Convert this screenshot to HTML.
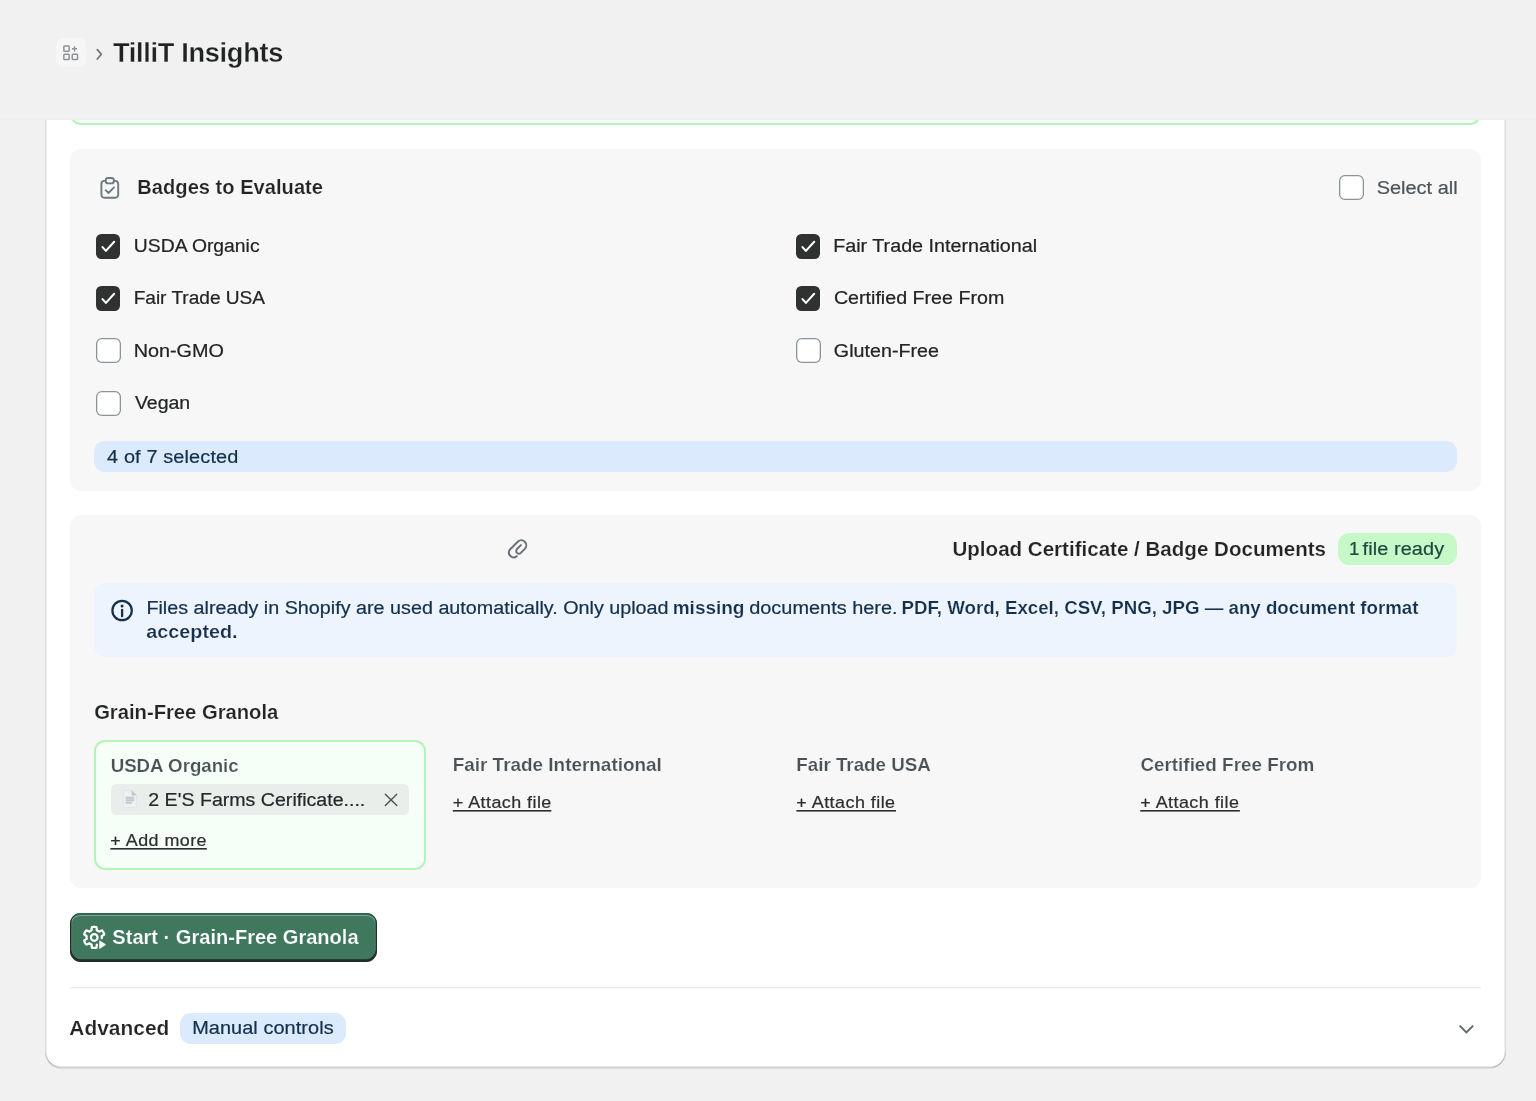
<!DOCTYPE html>
<html lang="en"><head><meta charset="utf-8"><title>TilliT Insights</title>
<style>
*{box-sizing:border-box;margin:0;padding:0}
html,body{width:1536px;height:1101px;overflow:hidden;background:#f1f1f1}
body{position:relative;font-family:"Liberation Sans", Arial, sans-serif;-webkit-font-smoothing:antialiased}
#root{position:absolute;left:0;top:0;width:1536px;height:1101px;will-change:transform}
.abs{position:absolute;overflow:visible}
.t{position:absolute;white-space:nowrap;line-height:1;transform-origin:0 0}
.t b{font-weight:700}
.t{-webkit-text-stroke:0.22px currentColor}
.card{position:absolute;left:45px;top:40px;width:1461px;height:1028px;background:#fff;border-radius:16.5px;
 box-shadow:inset 1.55px 0 0 rgba(0,0,0,.13),inset -1.55px 0 0 rgba(0,0,0,.13),inset 0 -1.4px 0 rgba(0,0,0,.18),0 1px 0 rgba(26,26,26,.09)}
.gbox{position:absolute;left:70px;top:40px;width:1411px;height:85px;border:2.2px solid #b4f4b8;border-radius:11px;background:#f5fef7}
.hdr{position:absolute;left:0;top:0;width:1536px;height:119.6px;background:#f1f1f1}
.hdrline{position:absolute;left:0;top:118.6px;width:1536px;height:1.2px;background:#eaeeec;opacity:.9}
.ibox{position:absolute;left:56.2px;top:37.9px;width:29.4px;height:29.6px;border-radius:7px;background:#f6f6f7}
.sec{position:absolute;background:#f7f7f7;border-radius:11px}
.pill{position:absolute;border-radius:11px}
.cb{position:absolute;width:24.75px;height:24.75px;border-radius:5.8px;background:#fff;box-shadow:inset 0 0 0 1.3px #8a9399}
.cb.on{background:#2f3230;box-shadow:none;width:24.5px;height:24.5px;border-radius:5.4px}
.cb.sel{box-shadow:inset 0 0 0 1.3px #8a9399}
.fbox{position:absolute;left:94.4px;top:739.8px;width:331.2px;height:129.8px;border:2.2px solid #b4f4b8;border-radius:11px;background:#f5fef7}
.chip{position:absolute;left:111px;top:784.2px;width:297.8px;height:30.8px;border-radius:5.5px;background:#e9eeeb}
.btn{position:absolute;left:69.6px;top:912.8px;width:307.6px;height:48.8px;border-radius:11px;background:#40785e;
 box-shadow:inset 0 -1.4px 0 1.4px rgba(28,32,30,.88),inset 0 2px 0 0 #2f6a50,inset 0 3px 0 0 rgba(240,240,255,.38),inset 2.1px 0 0 rgba(255,255,255,.2),inset -2.1px 0 0 rgba(255,255,255,.2)}
.divider{position:absolute;left:70px;top:987px;width:1411px;height:2px;background:linear-gradient(#eaedec 0 50%,#f6f8f7 50% 100%)}
</style></head><body>
<div id="root">
<div class="card"></div>
<div class="gbox"></div>
<div class="hdr"></div>
<div class="hdrline"></div>
<div class="ibox"></div>
<svg class="abs" style="left:56px;top:38px" width="30" height="30" viewBox="56 38 30 30" fill="none" stroke="#8b9398" stroke-width="1.5">
<rect x="63.85" y="46.05" width="5.3" height="5.3" rx="0.8"/>
<rect x="63.85" y="54.15" width="5.3" height="5.3" rx="0.8"/>
<rect x="72.25" y="54.15" width="5.3" height="5.3" rx="0.8"/>
<path d="M74.55 46.2 V51.4 M71.95 48.8 H77.15" stroke-width="1.4"/></svg>
<svg class="abs" style="left:92px;top:44px" width="16" height="20" viewBox="92 44 16 20" fill="none" stroke="#6c7479" stroke-width="1.7" stroke-linecap="round" stroke-linejoin="round">
<path d="M97.3 49.6 L101.3 54.3 L97.3 59"/></svg>
<span id="title" class="t" style="left:112.00px;top:39.00px;font-size:28px;color:#202223;font-weight:700;-webkit-text-stroke:0;letter-spacing:-0.306px;transform:translateX(0.912px) scaleX(0.9700);-webkit-text-stroke:0.32px #f1f1f1;">TilliT Insights</span>
<div class="sec" style="left:70px;top:149px;width:1411px;height:342px"></div>
<svg class="abs" style="left:96px;top:174px" width="28" height="28" viewBox="96 174 28 28" fill="none" stroke="#6d7a82" stroke-width="1.9" stroke-linecap="round" stroke-linejoin="round">
<path d="M105.2 180.9 H104.4 A3 3 0 0 0 101.4 183.9 V194.7 A3 3 0 0 0 104.4 197.7 H115.2 A3 3 0 0 0 118.2 194.7 V183.9 A3 3 0 0 0 115.2 180.9 H114.4"/>
<rect x="105.7" y="178" width="8.2" height="5.4" rx="2.4"/>
<path d="M105.7 190.2 L108.5 193 L114 187.4"/></svg>
<span id="badges" class="t" style="left:137.00px;top:178.00px;font-size:19.8px;color:#222425;font-weight:700;-webkit-text-stroke:0.18px #f7f7f7;letter-spacing:0.014px;transform:translateX(0.338px) scaleX(1.0158);">Badges to Evaluate</span>
<div class="cb sel" style="left:1339.2px;top:175.4px"></div>
<span id="selall" class="t" style="left:1376.00px;top:179.00px;font-size:18.8px;color:#4d5459;letter-spacing:0.014px;transform:translateX(0.681px) scaleX(1.0600);">Select all</span>
<div class="cb on" style="left:95.8px;top:234px"></div><svg class="abs" style="left:95.8px;top:234px" width="24.75" height="24.75" viewBox="0 0 24.75 24.75"><path d="M6.5 13.1 L9.9 16.9 L18.2 7.8" fill="none" stroke="#fff" stroke-width="2.05" stroke-linecap="round" stroke-linejoin="round"/></svg>
<span id="l0" class="t" style="left:133.00px;top:237.00px;font-size:18.8px;color:#222425;letter-spacing:-0.001px;transform:translateX(0.846px) scaleX(1.0297);">USDA Organic</span>
<div class="cb on" style="left:95.8px;top:286px"></div><svg class="abs" style="left:95.8px;top:286px" width="24.75" height="24.75" viewBox="0 0 24.75 24.75"><path d="M6.5 13.1 L9.9 16.9 L18.2 7.8" fill="none" stroke="#fff" stroke-width="2.05" stroke-linecap="round" stroke-linejoin="round"/></svg>
<span id="l1" class="t" style="left:133.00px;top:289.00px;font-size:18.8px;color:#222425;letter-spacing:-0.018px;transform:translateX(0.629px) scaleX(1.0172);">Fair Trade USA</span>
<div class="cb" style="left:95.8px;top:338px"></div>
<span id="l2" class="t" style="left:133.00px;top:342.00px;font-size:18.8px;color:#222425;letter-spacing:-0.024px;transform:translateX(0.630px) scaleX(1.0561);">Non-GMO</span>
<div class="cb" style="left:95.8px;top:391px"></div>
<span id="l3" class="t" style="left:134.00px;top:394.00px;font-size:18.8px;color:#222425;letter-spacing:-0.015px;transform:translateX(0.936px) scaleX(1.0391);">Vegan</span>
<div class="cb on" style="left:795.8px;top:234px"></div><svg class="abs" style="left:795.8px;top:234px" width="24.75" height="24.75" viewBox="0 0 24.75 24.75"><path d="M6.5 13.1 L9.9 16.9 L18.2 7.8" fill="none" stroke="#fff" stroke-width="2.05" stroke-linecap="round" stroke-linejoin="round"/></svg>
<span id="r0" class="t" style="left:833.00px;top:237.00px;font-size:18.8px;color:#222425;letter-spacing:0.001px;transform:translateX(0.183px) scaleX(1.0503);">Fair Trade International</span>
<div class="cb on" style="left:795.8px;top:286px"></div><svg class="abs" style="left:795.8px;top:286px" width="24.75" height="24.75" viewBox="0 0 24.75 24.75"><path d="M6.5 13.1 L9.9 16.9 L18.2 7.8" fill="none" stroke="#fff" stroke-width="2.05" stroke-linecap="round" stroke-linejoin="round"/></svg>
<span id="r1" class="t" style="left:833.00px;top:289.00px;font-size:18.8px;color:#222425;letter-spacing:0.005px;transform:translateX(0.881px) scaleX(1.0459);">Certified Free From</span>
<div class="cb" style="left:795.8px;top:338px"></div>
<span id="r2" class="t" style="left:833.00px;top:342.00px;font-size:18.8px;color:#222425;letter-spacing:0.014px;transform:translateX(0.824px) scaleX(1.0480);">Gluten-Free</span>
<div class="pill" style="left:94px;top:441.4px;width:1363px;height:30.8px;background:#dbeafd"></div>
<span id="sel47" class="t" style="left:107.00px;top:448.00px;font-size:18.8px;color:#14304b;letter-spacing:0.119px;transform:translateX(0.063px) scaleX(1.0600);">4 of 7 selected</span>
<div class="sec" style="left:70px;top:515px;width:1411px;height:373px"></div>
<svg class="abs" style="left:503px;top:535px" width="28" height="28" viewBox="-14 -14 28 28" fill="none" stroke="#687277" stroke-width="2" stroke-linecap="round">
<g transform="translate(0.3,0.3) rotate(-45)"><path d="M5.5 -0.4 L0 -0.4 A2.7 2.7 0 0 0 0 5 L5.6 5 A5 5 0 0 0 5.6 -5 L-5.6 -5 A4.8 4.8 0 0 0 -5.3 4.5"/></g></svg>
<span id="upload" class="t" style="left:952.00px;top:540.00px;font-size:19.8px;color:#222425;font-weight:700;-webkit-text-stroke:0.18px #f7f7f7;letter-spacing:0.002px;transform:translateX(0.467px) scaleX(1.0390);">Upload Certificate / Badge Documents</span>
<div class="pill" style="left:1337.5px;top:533px;width:119.5px;height:31.6px;background:#c6f8c8;border-radius:11.5px"></div>
<span id="ready1" class="t" style="left:1348.99px;top:540.00px;font-size:18.8px;color:#1d4a3c;letter-spacing:0.000px;">1</span>
<span id="ready" class="t" style="left:1362.00px;top:540.00px;font-size:18.8px;color:#1d4a3c;letter-spacing:0.089px;transform:translateX(0.520px) scaleX(1.0600);">file ready</span>
<div class="pill" style="left:94px;top:583.2px;width:1363px;height:73.5px;background:#edf4fe"></div>
<svg class="abs" style="left:108px;top:596px" width="28" height="28" viewBox="108 596 28 28">
<circle cx="122.1" cy="610.5" r="9.7" fill="none" stroke="#14304b" stroke-width="2.2"/>
<circle cx="122.1" cy="606" r="1.55" fill="#14304b"/>
<path d="M122.1 609.9 V616.2" stroke="#14304b" stroke-width="2.3" stroke-linecap="round"/></svg>
<span id="i1" class="t" style="left:146.00px;top:599.00px;font-size:18.8px;color:#14304b;letter-spacing:-0.005px;transform:translateX(0.379px) scaleX(1.0522);">Files already in Shopify are used automatically. Only upload</span>
<span id="i2" class="t" style="left:672.00px;top:599.00px;font-size:18.8px;color:#14304b;font-weight:700;-webkit-text-stroke:0.18px #edf4fe;letter-spacing:-0.027px;transform:translateX(0.724px) scaleX(1.0133);">missing</span>
<span id="i3" class="t" style="left:749.00px;top:599.00px;font-size:18.8px;color:#14304b;letter-spacing:0.006px;transform:translateX(0.193px) scaleX(1.0600);">documents here.</span>
<span id="i4" class="t" style="left:901.00px;top:599.00px;font-size:18.8px;color:#14304b;font-weight:700;-webkit-text-stroke:0.18px #edf4fe;letter-spacing:-0.008px;transform:translateX(0.588px) scaleX(0.9952);">PDF, Word, Excel, CSV, PNG, JPG — any document format</span>
<span id="i5" class="t" style="left:146.00px;top:623.00px;font-size:18.8px;color:#14304b;font-weight:700;-webkit-text-stroke:0.18px #edf4fe;letter-spacing:0.009px;transform:translateX(0.279px) scaleX(1.0528);">accepted.</span>
<span id="grain" class="t" style="left:94.00px;top:703.00px;font-size:19.8px;color:#222425;font-weight:700;-webkit-text-stroke:0.18px #f7f7f7;letter-spacing:-0.010px;transform:translateX(0.141px) scaleX(1.0223);">Grain-Free Granola</span>
<div class="fbox"></div>
<span id="c1" class="t" style="left:110.00px;top:757.00px;font-size:18.8px;color:#4a5257;font-weight:700;-webkit-text-stroke:0.18px #f5fef7;letter-spacing:0.011px;transform:translateX(0.655px) scaleX(0.9939);">USDA Organic</span>
<div class="chip"></div>
<svg class="abs" style="left:120px;top:788px" width="20" height="22" viewBox="120 788 20 22">
<path d="M123.2 790.6 H131.8 L136.6 795.4 V807.6 H123.2 Z" fill="#eef1f2" stroke="#dde4ef" stroke-width="0.9"/>
<path d="M131.6 790.2 L136.9 795.5 H131.6 Z" fill="#c3c6c7"/>
<path d="M125.6 797.7 H134.2 M125.6 800.25 H134.2 M125.6 802.8 H131.8" stroke="#c4c6c7" stroke-width="1.9"/></svg>
<span id="fname" class="t" style="left:148.00px;top:791.00px;font-size:18.8px;color:#26292b;letter-spacing:-0.006px;transform:translateX(0.286px) scaleX(1.0433);">2 E'S Farms Cerificate....</span>
<svg class="abs" style="left:381px;top:790px" width="20" height="20" viewBox="381 790 20 20" stroke="#4a4f50" stroke-width="1.35" stroke-linecap="round">
<path d="M385.3 794.3 L396.8 805.5 M396.8 794.3 L385.3 805.5"/></svg>
<span id="addmore" class="t" style="left:110.00px;top:833.00px;font-size:16.9px;color:#2b2f31;letter-spacing:0.431px;transform:translateX(0.374px) scaleX(1.0600);background:linear-gradient(#2b2f31,#2b2f31) 0 15px/100% 1px no-repeat,linear-gradient(rgba(43,47,49,.6),rgba(43,47,49,.6)) 0 16px/100% 1px no-repeat;">+ Add more</span>
<span id="cl0" class="t" style="left:452.00px;top:756.00px;font-size:18.8px;color:#4a5257;font-weight:700;-webkit-text-stroke:0.18px #f7f7f7;letter-spacing:-0.008px;transform:translateX(0.682px) scaleX(1.0079);">Fair Trade International</span>
<span id="at0" class="t" style="left:452.00px;top:795.00px;font-size:16.9px;color:#2b2f31;letter-spacing:0.431px;transform:translateX(0.789px) scaleX(1.0600);background:linear-gradient(#2b2f31,#2b2f31) 0 15px/100% 1px no-repeat,linear-gradient(rgba(43,47,49,.6),rgba(43,47,49,.6)) 0 16px/100% 1px no-repeat;">+ Attach file</span>
<span id="cl1" class="t" style="left:796.00px;top:756.00px;font-size:18.8px;color:#4a5257;font-weight:700;-webkit-text-stroke:0.18px #f7f7f7;letter-spacing:-0.014px;transform:translateX(0.305px) scaleX(1.0003);">Fair Trade USA</span>
<span id="at1" class="t" style="left:796.00px;top:795.00px;font-size:16.9px;color:#2b2f31;letter-spacing:0.446px;transform:translateX(0.345px) scaleX(1.0600);background:linear-gradient(#2b2f31,#2b2f31) 0 15px/100% 1px no-repeat,linear-gradient(rgba(43,47,49,.6),rgba(43,47,49,.6)) 0 16px/100% 1px no-repeat;">+ Attach file</span>
<span id="cl2" class="t" style="left:1140.00px;top:756.00px;font-size:18.8px;color:#4a5257;font-weight:700;-webkit-text-stroke:0.18px #f7f7f7;letter-spacing:0.004px;transform:translateX(0.376px) scaleX(1.0037);">Certified Free From</span>
<span id="at2" class="t" style="left:1140.00px;top:795.00px;font-size:16.9px;color:#2b2f31;letter-spacing:0.441px;transform:translateX(0.250px) scaleX(1.0600);background:linear-gradient(#2b2f31,#2b2f31) 0 15px/100% 1px no-repeat,linear-gradient(rgba(43,47,49,.6),rgba(43,47,49,.6)) 0 16px/100% 1px no-repeat;">+ Attach file</span>
<div class="btn"></div>
<svg class="abs" style="left:80px;top:922px" width="30" height="30" viewBox="80 922 30 30">
<path d="M101.76 938.24 L101.78 937.98 L101.80 937.72 L101.80 937.45 L101.80 937.18 L101.78 936.92 L101.76 936.66 L101.73 936.39 L101.71 936.13 L102.18 935.75 L103.01 935.25 L103.81 934.70 L104.21 934.20 L104.11 933.84 L103.98 933.50 L103.84 933.16 L103.68 932.83 L103.52 932.50 L103.34 932.18 L103.15 931.86 L102.95 931.55 L102.74 931.25 L102.51 930.95 L102.28 930.67 L102.02 930.41 L101.39 930.51 L100.50 930.92 L99.66 931.39 L99.10 931.61 L98.88 931.46 L98.67 931.30 L98.45 931.15 L98.23 931.00 L98.00 930.87 L97.77 930.74 L97.53 930.62 L97.29 930.51 L97.05 930.40 L96.81 930.28 L96.72 929.69 L96.70 928.73 L96.62 927.75 L96.39 927.16 L96.03 927.06 L95.67 927.00 L95.30 926.96 L94.94 926.93 L94.57 926.91 L94.20 926.90 L93.83 926.91 L93.46 926.93 L93.10 926.96 L92.73 927.00 L92.37 927.06 L92.01 927.16 L91.78 927.75 L91.70 928.73 L91.68 929.69 L91.59 930.28 L91.35 930.40 L91.11 930.51 L90.87 930.62 L90.63 930.74 L90.40 930.87 L90.17 931.00 L89.95 931.15 L89.73 931.30 L89.52 931.46 L89.30 931.61 L88.74 931.39 L87.90 930.92 L87.01 930.51 L86.38 930.41 L86.12 930.67 L85.89 930.95 L85.66 931.25 L85.45 931.55 L85.25 931.86 L85.06 932.18 L84.88 932.50 L84.72 932.83 L84.56 933.16 L84.42 933.50 L84.29 933.84 L84.19 934.20 L84.59 934.70 L85.39 935.25 L86.22 935.75 L86.69 936.13 L86.67 936.39 L86.64 936.66 L86.62 936.92 L86.60 937.18 L86.60 937.45 L86.60 937.72 L86.62 937.98 L86.64 938.24 L86.67 938.51 L86.69 938.77 L86.22 939.15 L85.39 939.65 L84.59 940.20 L84.19 940.70 L84.29 941.06 L84.42 941.40 L84.56 941.74 L84.72 942.07 L84.88 942.40 L85.06 942.73 L85.25 943.04 L85.45 943.35 L85.66 943.65 L85.89 943.95 L86.12 944.23 L86.38 944.49 L87.01 944.39 L87.90 943.98 L88.74 943.51 L89.30 943.29 L89.52 943.44 L89.73 943.60 L89.95 943.75 L90.17 943.90 L90.40 944.03 L90.63 944.16 L90.87 944.28 L91.11 944.39 L91.35 944.50 L91.59 944.62 L91.68 945.21 L91.70 946.17 L91.78 947.15 L92.01 947.74 L92.37 947.84 L92.73 947.90 L93.10 947.94 L93.46 947.97 L93.83 947.99 L94.20 948.00 L94.57 947.99 L94.94 947.97 L95.30 947.94 L95.67 947.90 L96.03 947.84 L96.39 947.74 L96.62 947.15 L96.70 946.17 L96.72 945.21 L96.81 944.62" fill="none" stroke="#fff" stroke-width="2.25" stroke-linecap="round" stroke-linejoin="round"/>
<circle cx="94.2" cy="937.45" r="3.35" fill="none" stroke="#fff" stroke-width="2.25"/>
<path d="M99.7 940.9 L105.5 944.6 L99.7 948.5 Z" fill="#fff" stroke="#fff" stroke-width="0.8" stroke-linejoin="round"/></svg>
<span id="start" class="t" style="left:112.00px;top:928.00px;font-size:19.8px;color:#ffffff;font-weight:700;-webkit-text-stroke:0.18px #40785e;letter-spacing:0.005px;transform:translateX(0.367px) scaleX(1.0128);">Start · Grain-Free Granola</span>
<div class="divider"></div>
<span id="adv" class="t" style="left:69.00px;top:1019.00px;font-size:19.8px;color:#222425;font-weight:700;-webkit-text-stroke:0.18px #ffffff;letter-spacing:0.031px;transform:translateX(0.309px) scaleX(1.0560);">Advanced</span>
<div class="pill" style="left:180.3px;top:1013px;width:165.4px;height:31px;background:#dbeafd"></div>
<span id="manual" class="t" style="left:192.00px;top:1019.00px;font-size:18.8px;color:#14304b;letter-spacing:0.065px;transform:translateX(0.128px) scaleX(1.0600);">Manual controls</span>
<svg class="abs" style="left:1452px;top:1018px" width="28" height="22" viewBox="1452 1018 28 22" fill="none" stroke="#5e686e" stroke-width="2">
<path d="M1459.6 1025.6 L1466.4 1032.4 L1473.2 1025.6"/></svg>
</div>
</body></html>
